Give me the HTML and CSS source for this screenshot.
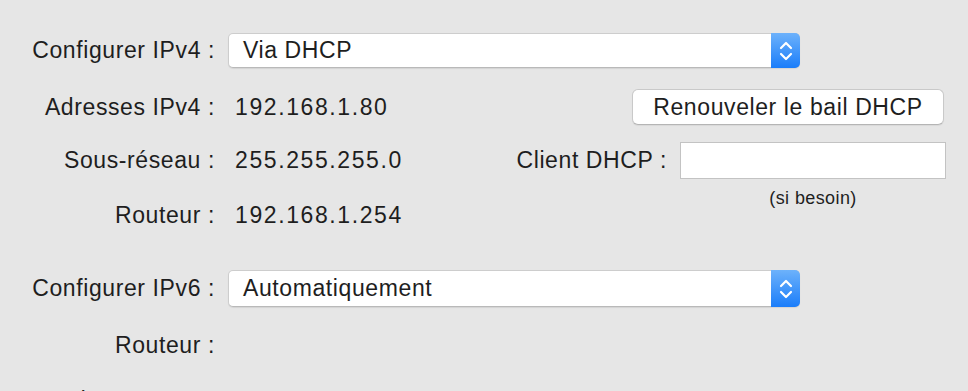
FILE: index.html
```html
<!DOCTYPE html>
<html lang="fr">
  <head>
    <meta charset="UTF-8" />
    <meta name="viewport" content="width=device-width, initial-scale=1.0" />
    <title>Réseau – TCP/IP</title>
    <link rel="stylesheet" href="styles.css">
  </head>
  <body>
    <section class="pane">
      <div class="row row-first">
        <span class="label">Configurer IPv4 :</span>
        <div class="popup">
          <span class="popup-text">Via DHCP</span>
          <span class="stepper">
            <svg width="16" height="24" viewBox="0 0 16 24">
              <path d="M3 9 L8 4 L13 9" />
              <path d="M3 15 L8 20 L13 15" />
            </svg>
          </span>
        </div>
      </div>

      <div class="row row-button">
        <span class="label">Adresses IPv4 :</span>
        <span class="value">192.168.1.80</span>
        <button class="btn">Renouveler le bail DHCP</button>
      </div>

      <div class="row row-client">
        <span class="label">Sous-réseau :</span>
        <span class="value">255.255.255.0</span>
        <span class="label">Client DHCP :</span>
        <input class="field" type="text" />
      </div>

      <div class="row row-router">
        <span class="label">Routeur :</span>
        <span class="value">192.168.1.254</span>
        <span class="hint">(si besoin)</span>
      </div>

      <div class="row row-popup6">
        <span class="label">Configurer IPv6 :</span>
        <div class="popup">
          <span class="popup-text">Automatiquement</span>
          <span class="stepper">
            <svg width="16" height="24" viewBox="0 0 16 24">
              <path d="M3 9 L8 4 L13 9" />
              <path d="M3 15 L8 20 L13 15" />
            </svg>
          </span>
        </div>
      </div>

      <div class="row row-plain">
        <span class="label">Routeur :</span>
      </div>

      <div class="row row-last">
        <span class="label">Adresse IPv6 :</span>
      </div>
    </section>
  </body>
</html>
```

FILE: styles.css
```css
body {
  margin: 0;
  padding: 0;
  background-color: #e6e6e6;
  font-family: "Liberation Sans", Arial, sans-serif;
  font-size: 23px;
  letter-spacing: 0.6px;
  color: #1e1e1e;
  overflow: hidden;
  height: 391px;
}
.pane {
  display: flex;
  flex-direction: column;
}
.row {
  display: grid;
  grid-template-columns: 215px 259px 167px 266px;
  column-gap: 13px;
  align-items: center;
  height: 36px;
}
.row-first {
  margin-top: 33px;
  height: 35px;
}
.row-button {
  margin-top: 21px;
}
.row-client {
  margin-top: 17px;
  height: 37px;
}
.row-router {
  margin-top: 9px;
  height: 54px;
}
.row-popup6 {
  margin-top: 28px;
  height: 37px;
}
.row-plain {
  margin-top: 20px;
}
.row-last {
  margin-top: 19px;
}
.label {
  text-align: right;
  white-space: nowrap;
}
.value {
  padding-left: 7px;
  white-space: nowrap;
  letter-spacing: 1.6px;
}
.popup {
  grid-column: 2 / 5;
  justify-self: start;
  width: 572px;
  height: 100%;
  box-sizing: border-box;
  display: flex;
  align-items: center;
  background: #fff;
  border: 1px solid #cdcdcd;
  border-bottom-color: #b9b9b9;
  border-radius: 5px;
  box-shadow: 0 1px 1px rgba(0, 0, 0, 0.08);
}
.popup-text {
  flex: 1;
  padding-left: 14px;
}
.stepper {
  width: 29px;
  height: calc(100% + 2px);
  margin: -1px -1px -1px 0;
  display: flex;
  align-items: center;
  justify-content: center;
  background: linear-gradient(#6db2fb, #1a7dfa);
  border-radius: 0 5px 5px 0;
}
.stepper path {
  fill: none;
  stroke: #fff;
  stroke-width: 2.2;
  stroke-linecap: round;
  stroke-linejoin: round;
}
.btn {
  grid-column: 3 / 5;
  justify-self: end;
  margin-right: 2px;
  width: 312px;
  height: 36px;
  font: inherit;
  letter-spacing: inherit;
  color: inherit;
  background: #fff;
  border: 1px solid #c9c9c9;
  border-bottom-color: #b5b5b5;
  border-radius: 6px;
  box-shadow: 0 1px 1px rgba(0, 0, 0, 0.06);
  padding: 0;
}
.field {
  height: 37px;
  width: 266px;
  box-sizing: border-box;
  background: #fff;
  border: 1px solid #c3c3c3;
  border-radius: 0;
  margin: 0;
  padding: 0 6px;
}
.hint {
  grid-column: 4;
  align-self: start;
  justify-self: center;
  font-size: 18px;
  letter-spacing: 0.4px;
  line-height: 20px;
}
```
